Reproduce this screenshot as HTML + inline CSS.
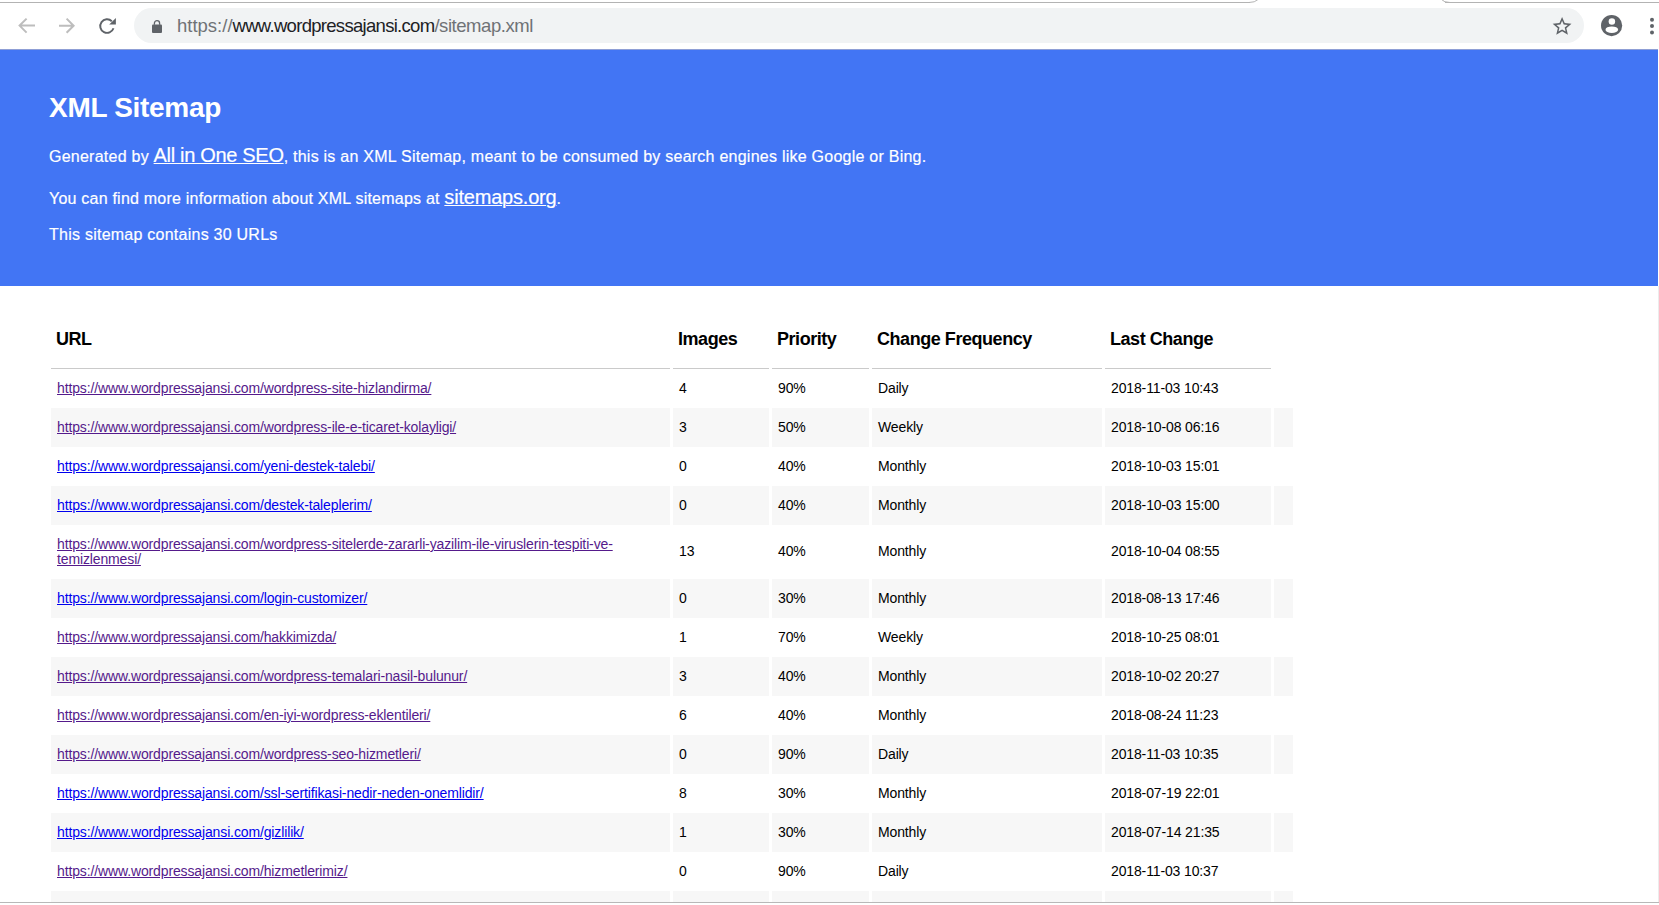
<!DOCTYPE html>
<html><head><meta charset="utf-8"><title>XML Sitemap</title>
<style>
*{margin:0;padding:0;box-sizing:border-box}
html,body{width:1659px;height:905px;overflow:hidden;background:#fff;font-family:"Liberation Sans",sans-serif;position:relative}
.abs{position:absolute}
.tabline{position:absolute;left:0;top:2px;height:1px;background:#b3b3b3}
#omni{position:absolute;left:134px;top:8px;width:1450px;height:35px;border-radius:17.5px;background:#f1f3f4}
#url{position:absolute;left:177px;top:15px;font-size:18.5px;line-height:22px;white-space:nowrap;color:#6f7276;letter-spacing:-0.45px}
#url b{font-weight:normal;color:#202124;letter-spacing:-0.7px}
#hdr{position:absolute;left:0;top:49px;width:1658px;height:237px;background:#4275f4;color:#fff;-webkit-text-stroke:0.2px #fff}
#hdr h1{position:absolute;left:49px;top:43px;font-size:28px;font-weight:bold;line-height:32px;white-space:nowrap;letter-spacing:-0.3px;-webkit-text-stroke:0}
#hdr p{position:absolute;left:49px;font-size:16px;letter-spacing:0.245px;white-space:nowrap;line-height:20px}
#hdr p a{font-size:20px;letter-spacing:-0.32px;color:#fff;text-decoration:underline;text-decoration-thickness:1px;text-underline-offset:1px}
.th{position:absolute;top:300px;height:69px;border-bottom:1px solid #cacaca}
.th span{position:absolute;left:5px;top:29px;font-size:18px;font-weight:bold;line-height:21px;color:#000;white-space:nowrap;letter-spacing:-0.45px}
.r{position:absolute;left:0;width:1659px}
.c{position:absolute;top:0;padding-left:6px}
.g .c{background:#f7f7f7}
.c span{display:block;font-size:14px;line-height:15px;color:#000;white-space:nowrap;letter-spacing:-0.13px}
a{text-decoration:underline}
a.v{color:#551a8b}
a.l{color:#0000ee}
#botline{position:absolute;left:0;top:902px;width:1659px;height:1px;background:#b8b8b8}
#botw{position:absolute;left:0;top:903px;width:1659px;height:2px;background:#fff}
</style></head><body>
<div class="tabline" style="width:1250px"></div>
<div class="tabline" style="left:1445px;width:214px"></div>
<svg class="abs" style="left:1240px;top:0" width="220" height="4" viewBox="0 0 220 4"><path d="M9 2.5 Q15 2.5 18 -0.5" stroke="#b3b3b3" stroke-width="1" fill="none"/><path d="M201.5 -0.5 Q204 2.5 210 2.5" stroke="#b3b3b3" stroke-width="1" fill="none"/></svg>
<svg class="abs" style="left:0;top:0" width="130" height="49" viewBox="0 0 130 49">
 <g fill="none" stroke="#bdbdbd" stroke-width="2">
  <path d="M35 25.6H20.5M26.6 18.6L19.6 25.6L26.6 32.6"/>
  <path d="M59 25.7H73.5M66.6 18.6L73.6 25.7L66.6 32.7"/>
 </g>
 <path d="M113.5 28.2A6.8 6.8 0 1 1 111.8 21.2" stroke="#5f6368" stroke-width="1.9" fill="none"/>
 <path d="M109.2 24.6H115.9V17.9Z" fill="#5f6368"/>
</svg>
<div id="omni"></div>
<svg class="abs" style="left:148px;top:16px" width="18" height="20" viewBox="0 0 18 20">
 <path d="M6.4 8.7V7.2a2.6 2.6 0 0 1 5.2 0V8.7" stroke="#5f6368" stroke-width="1.3" fill="none"/>
 <rect x="4" y="8.5" width="10" height="8.5" rx="1" fill="#5f6368"/>
</svg>
<div id="url"><i style="font-style:normal;letter-spacing:0px">https://</i><b>www.wordpressajansi.com</b>/sitemap.xml</div>
<svg class="abs" style="left:1540px;top:5px" width="119" height="44" viewBox="1540 5 119 44">
 <g transform="translate(1550.8,15.0) scale(0.94)" fill="#5f6368"><path d="M22 9.24l-7.19-.62L12 2 9.19 8.63 2 9.24l5.46 4.73L5.82 21 12 17.27 18.18 21l-1.63-7.03L22 9.24zM12 15.4l-3.76 2.27 1-4.28-3.32-2.88 4.380-.38L12 6.1l1.71 4.04 4.38.38-3.32 2.88 1 4.28L12 15.4z"/></g>
 <circle cx="1611.6" cy="25.6" r="10.6" fill="#5f6368"/>
 <circle cx="1611.9" cy="21.4" r="3.25" fill="#fff"/>
 <ellipse cx="1611.8" cy="29.7" rx="6.3" ry="3.3" fill="#fff"/>
 <circle cx="1652" cy="19.8" r="2" fill="#5f6368"/>
 <circle cx="1652" cy="26.1" r="2" fill="#5f6368"/>
 <circle cx="1652" cy="32.4" r="2" fill="#5f6368"/>
</svg>
<div id="hdr">
 <h1>XML Sitemap</h1>
 <p style="top:96px">Generated by <a>All in One SEO</a>, this is an XML Sitemap, meant to be consumed by search engines like Google or Bing.</p>
 <p style="top:138px;letter-spacing:0.22px">You can find more information about XML sitemaps at <a style="letter-spacing:-0.2px">sitemaps.org</a>.</p>
 <p style="top:176px">This sitemap contains 30 URLs</p>
</div>
<div class="th" style="left:51px;width:619px"><span>URL</span></div><div class="th" style="left:673px;width:96px"><span>Images</span></div><div class="th" style="left:772px;width:97px"><span>Priority</span></div><div class="th" style="left:872px;width:230px"><span>Change Frequency</span></div><div class="th" style="left:1105px;width:166px"><span>Last Change</span></div>
<div class="r" style="top:369px;height:39px"><div class="c" style="left:51px;width:619px;height:39px;padding-top:12px"><span><a class="v">https://www.wordpressajansi.com/wordpress-site-hizlandirma/</a></span></div><div class="c" style="left:673px;width:96px;height:39px;padding-top:12px"><span>4</span></div><div class="c" style="left:772px;width:97px;height:39px;padding-top:12px"><span>90%</span></div><div class="c" style="left:872px;width:230px;height:39px;padding-top:12px"><span>Daily</span></div><div class="c" style="left:1105px;width:166px;height:39px;padding-top:12px"><span>2018-11-03 10:43</span></div><div class="c" style="left:1274px;width:19px;height:39px;padding-top:12px"><span></span></div></div><div class="r g" style="top:408px;height:39px"><div class="c" style="left:51px;width:619px;height:39px;padding-top:12px"><span><a class="v">https://www.wordpressajansi.com/wordpress-ile-e-ticaret-kolayligi/</a></span></div><div class="c" style="left:673px;width:96px;height:39px;padding-top:12px"><span>3</span></div><div class="c" style="left:772px;width:97px;height:39px;padding-top:12px"><span>50%</span></div><div class="c" style="left:872px;width:230px;height:39px;padding-top:12px"><span>Weekly</span></div><div class="c" style="left:1105px;width:166px;height:39px;padding-top:12px"><span>2018-10-08 06:16</span></div><div class="c" style="left:1274px;width:19px;height:39px;padding-top:12px"><span></span></div></div><div class="r" style="top:447px;height:39px"><div class="c" style="left:51px;width:619px;height:39px;padding-top:12px"><span><a class="l">https://www.wordpressajansi.com/yeni-destek-talebi/</a></span></div><div class="c" style="left:673px;width:96px;height:39px;padding-top:12px"><span>0</span></div><div class="c" style="left:772px;width:97px;height:39px;padding-top:12px"><span>40%</span></div><div class="c" style="left:872px;width:230px;height:39px;padding-top:12px"><span>Monthly</span></div><div class="c" style="left:1105px;width:166px;height:39px;padding-top:12px"><span>2018-10-03 15:01</span></div><div class="c" style="left:1274px;width:19px;height:39px;padding-top:12px"><span></span></div></div><div class="r g" style="top:486px;height:39px"><div class="c" style="left:51px;width:619px;height:39px;padding-top:12px"><span><a class="l">https://www.wordpressajansi.com/destek-taleplerim/</a></span></div><div class="c" style="left:673px;width:96px;height:39px;padding-top:12px"><span>0</span></div><div class="c" style="left:772px;width:97px;height:39px;padding-top:12px"><span>40%</span></div><div class="c" style="left:872px;width:230px;height:39px;padding-top:12px"><span>Monthly</span></div><div class="c" style="left:1105px;width:166px;height:39px;padding-top:12px"><span>2018-10-03 15:00</span></div><div class="c" style="left:1274px;width:19px;height:39px;padding-top:12px"><span></span></div></div><div class="r" style="top:525px;height:54px"><div class="c" style="left:51px;width:619px;height:54px;padding-top:12px"><span><a class="v">https://www.wordpressajansi.com/wordpress-sitelerde-zararli-yazilim-ile-viruslerin-tespiti-ve-<br>temizlenmesi/</a></span></div><div class="c" style="left:673px;width:96px;height:54px;padding-top:19px"><span>13</span></div><div class="c" style="left:772px;width:97px;height:54px;padding-top:19px"><span>40%</span></div><div class="c" style="left:872px;width:230px;height:54px;padding-top:19px"><span>Monthly</span></div><div class="c" style="left:1105px;width:166px;height:54px;padding-top:19px"><span>2018-10-04 08:55</span></div><div class="c" style="left:1274px;width:19px;height:54px;padding-top:19px"><span></span></div></div><div class="r g" style="top:579px;height:39px"><div class="c" style="left:51px;width:619px;height:39px;padding-top:12px"><span><a class="l">https://www.wordpressajansi.com/login-customizer/</a></span></div><div class="c" style="left:673px;width:96px;height:39px;padding-top:12px"><span>0</span></div><div class="c" style="left:772px;width:97px;height:39px;padding-top:12px"><span>30%</span></div><div class="c" style="left:872px;width:230px;height:39px;padding-top:12px"><span>Monthly</span></div><div class="c" style="left:1105px;width:166px;height:39px;padding-top:12px"><span>2018-08-13 17:46</span></div><div class="c" style="left:1274px;width:19px;height:39px;padding-top:12px"><span></span></div></div><div class="r" style="top:618px;height:39px"><div class="c" style="left:51px;width:619px;height:39px;padding-top:12px"><span><a class="v">https://www.wordpressajansi.com/hakkimizda/</a></span></div><div class="c" style="left:673px;width:96px;height:39px;padding-top:12px"><span>1</span></div><div class="c" style="left:772px;width:97px;height:39px;padding-top:12px"><span>70%</span></div><div class="c" style="left:872px;width:230px;height:39px;padding-top:12px"><span>Weekly</span></div><div class="c" style="left:1105px;width:166px;height:39px;padding-top:12px"><span>2018-10-25 08:01</span></div><div class="c" style="left:1274px;width:19px;height:39px;padding-top:12px"><span></span></div></div><div class="r g" style="top:657px;height:39px"><div class="c" style="left:51px;width:619px;height:39px;padding-top:12px"><span><a class="v">https://www.wordpressajansi.com/wordpress-temalari-nasil-bulunur/</a></span></div><div class="c" style="left:673px;width:96px;height:39px;padding-top:12px"><span>3</span></div><div class="c" style="left:772px;width:97px;height:39px;padding-top:12px"><span>40%</span></div><div class="c" style="left:872px;width:230px;height:39px;padding-top:12px"><span>Monthly</span></div><div class="c" style="left:1105px;width:166px;height:39px;padding-top:12px"><span>2018-10-02 20:27</span></div><div class="c" style="left:1274px;width:19px;height:39px;padding-top:12px"><span></span></div></div><div class="r" style="top:696px;height:39px"><div class="c" style="left:51px;width:619px;height:39px;padding-top:12px"><span><a class="v">https://www.wordpressajansi.com/en-iyi-wordpress-eklentileri/</a></span></div><div class="c" style="left:673px;width:96px;height:39px;padding-top:12px"><span>6</span></div><div class="c" style="left:772px;width:97px;height:39px;padding-top:12px"><span>40%</span></div><div class="c" style="left:872px;width:230px;height:39px;padding-top:12px"><span>Monthly</span></div><div class="c" style="left:1105px;width:166px;height:39px;padding-top:12px"><span>2018-08-24 11:23</span></div><div class="c" style="left:1274px;width:19px;height:39px;padding-top:12px"><span></span></div></div><div class="r g" style="top:735px;height:39px"><div class="c" style="left:51px;width:619px;height:39px;padding-top:12px"><span><a class="v">https://www.wordpressajansi.com/wordpress-seo-hizmetleri/</a></span></div><div class="c" style="left:673px;width:96px;height:39px;padding-top:12px"><span>0</span></div><div class="c" style="left:772px;width:97px;height:39px;padding-top:12px"><span>90%</span></div><div class="c" style="left:872px;width:230px;height:39px;padding-top:12px"><span>Daily</span></div><div class="c" style="left:1105px;width:166px;height:39px;padding-top:12px"><span>2018-11-03 10:35</span></div><div class="c" style="left:1274px;width:19px;height:39px;padding-top:12px"><span></span></div></div><div class="r" style="top:774px;height:39px"><div class="c" style="left:51px;width:619px;height:39px;padding-top:12px"><span><a class="l">https://www.wordpressajansi.com/ssl-sertifikasi-nedir-neden-onemlidir/</a></span></div><div class="c" style="left:673px;width:96px;height:39px;padding-top:12px"><span>8</span></div><div class="c" style="left:772px;width:97px;height:39px;padding-top:12px"><span>30%</span></div><div class="c" style="left:872px;width:230px;height:39px;padding-top:12px"><span>Monthly</span></div><div class="c" style="left:1105px;width:166px;height:39px;padding-top:12px"><span>2018-07-19 22:01</span></div><div class="c" style="left:1274px;width:19px;height:39px;padding-top:12px"><span></span></div></div><div class="r g" style="top:813px;height:39px"><div class="c" style="left:51px;width:619px;height:39px;padding-top:12px"><span><a class="l">https://www.wordpressajansi.com/gizlilik/</a></span></div><div class="c" style="left:673px;width:96px;height:39px;padding-top:12px"><span>1</span></div><div class="c" style="left:772px;width:97px;height:39px;padding-top:12px"><span>30%</span></div><div class="c" style="left:872px;width:230px;height:39px;padding-top:12px"><span>Monthly</span></div><div class="c" style="left:1105px;width:166px;height:39px;padding-top:12px"><span>2018-07-14 21:35</span></div><div class="c" style="left:1274px;width:19px;height:39px;padding-top:12px"><span></span></div></div><div class="r" style="top:852px;height:39px"><div class="c" style="left:51px;width:619px;height:39px;padding-top:12px"><span><a class="v">https://www.wordpressajansi.com/hizmetlerimiz/</a></span></div><div class="c" style="left:673px;width:96px;height:39px;padding-top:12px"><span>0</span></div><div class="c" style="left:772px;width:97px;height:39px;padding-top:12px"><span>90%</span></div><div class="c" style="left:872px;width:230px;height:39px;padding-top:12px"><span>Daily</span></div><div class="c" style="left:1105px;width:166px;height:39px;padding-top:12px"><span>2018-11-03 10:37</span></div><div class="c" style="left:1274px;width:19px;height:39px;padding-top:12px"><span></span></div></div><div class="r g" style="top:891px;height:39px"><div class="c" style="left:51px;width:619px;height:39px;padding-top:12px"><span></span></div><div class="c" style="left:673px;width:96px;height:39px;padding-top:12px"><span></span></div><div class="c" style="left:772px;width:97px;height:39px;padding-top:12px"><span></span></div><div class="c" style="left:872px;width:230px;height:39px;padding-top:12px"><span></span></div><div class="c" style="left:1105px;width:166px;height:39px;padding-top:12px"><span></span></div><div class="c" style="left:1274px;width:19px;height:39px;padding-top:12px"><span></span></div></div>
<div class="abs" style="left:0;top:49px;width:1658px;height:1px;background:#8f9fd6"></div><div class="abs" style="left:1658px;top:286px;width:1px;height:616px;background:#ececec"></div><div id="botline"></div><div id="botw"></div>
</body></html>
